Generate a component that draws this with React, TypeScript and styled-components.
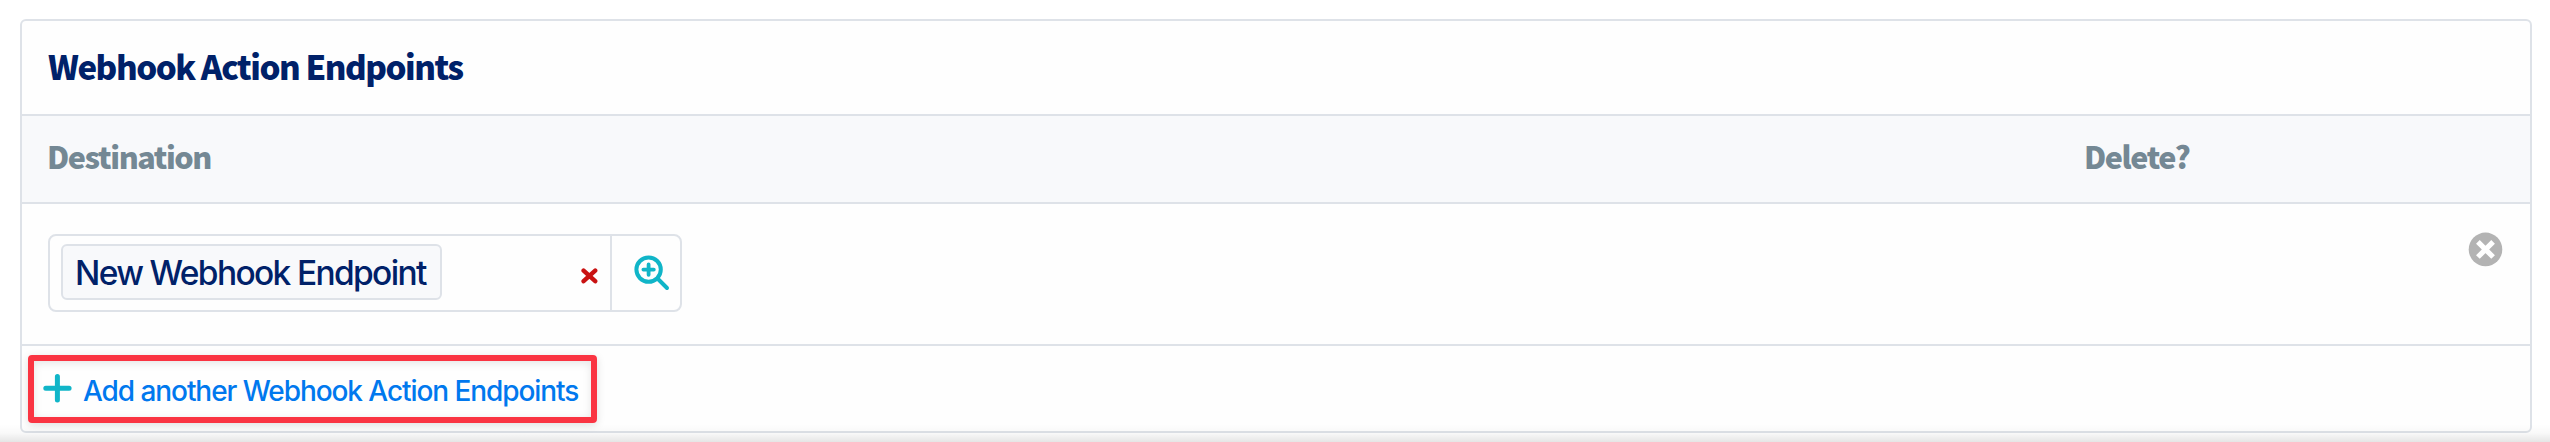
import React from "react";
import styled, { createGlobalStyle } from "styled-components";

const line = "#dee2e8";

const GlobalStyle = createGlobalStyle`
  *, *::before, *::after { box-sizing: border-box; }
  body { margin: 0; background: #fff; overflow: hidden; }
`;

const Page = styled.main`
  position: relative;
  width: 2550px;
  height: 442px;
  padding: 19px 18px 9px 20px;
  font-family: Inter, "Liberation Sans", sans-serif;
`;

const Panel = styled.section`
  height: 414px;
  border: 2px solid ${line};
  border-radius: 6px;
  background: #fefefe;
`;

const Title = styled.h2`
  margin: 0;
  height: 93px;
  padding-left: 26px;
  font: 900 33px/90px "Noto Sans CJK SC", sans-serif;
  letter-spacing: -1.45px;
  color: #002169;
`;

const HeaderRow = styled.div`
  display: grid;
  grid-template-columns: 2037px 1fr;
  height: 90px;
  padding-left: 25px;
  border: solid ${line};
  border-width: 2px 0;
  background: #f8f9fb;
`;

const HeaderCell = styled.div`
  font: 900 30.5px/81px "Noto Sans CJK SC", sans-serif;
  letter-spacing: -1.4px;
  color: #748894;
`;

const EndpointRow = styled.div`
  display: flex;
  justify-content: space-between;
  align-items: flex-start;
  height: 142px;
  padding: 28px 27px 0 26px;
  border-bottom: 2px solid ${line};
`;

const Picker = styled.div`
  display: flex;
  width: 634px;
  height: 78px;
  margin-top: 2px;
  border: 2px solid ${line};
  border-radius: 8px;
`;

const Selection = styled.div`
  display: flex;
  flex: 1;
  justify-content: space-between;
  padding: 8px 12px 8px 11px;
`;

const Chip = styled.span`
  width: 381px;
  height: 56px;
  padding-left: 12px;
  border: 2px solid ${line};
  border-radius: 6px;
  background: #f8f9fb;
  font-size: 33.5px;
  font-weight: 500;
  line-height: 54px;
  letter-spacing: -1.65px;
  white-space: nowrap;
  color: #002169;
`;

const IconButton = styled.button`
  padding: 0;
  border: 0;
  background: none;
  svg { display: block; }
`;

const ClearButton = styled(IconButton)`
  align-self: flex-start;
  margin-top: 24px;
`;

const LookupButton = styled(IconButton)`
  display: flex;
  align-items: flex-start;
  width: 70px;
  padding: 19px 0 0 22px;
  border-left: 2px solid ${line};
`;

const AddRow = styled.div`
  height: 85px;
  padding: 9px 0 0 6px;
`;

const Highlight = styled.div`
  display: flex;
  align-items: flex-start;
  width: 569px;
  height: 68px;
  padding: 13px 0 0 9px;
  border: 6px solid #fa3442;
  border-radius: 4px;
  box-shadow: 0 2px 8px rgba(0, 0, 0, 0.13), inset 0 2px 8px rgba(0, 0, 0, 0.1);
`;

const AddLink = styled.a`
  margin-left: 11px;
  font-size: 28px;
  font-weight: 500;
  line-height: 35px;
  letter-spacing: -1.07px;
  white-space: nowrap;
  color: #0078ee;
`;

const BottomFade = styled.div`
  position: absolute;
  inset: auto 0 0;
  height: 18px;
  background: linear-gradient(rgba(0, 0, 0, 0), rgba(0, 0, 0, 0.025) 50%, rgba(0, 0, 0, 0.1));
  pointer-events: none;
`;

const ClearIcon = () => (
  <svg width="17" height="16" viewBox="0 0 17 16" fill="none" stroke="#c91212" strokeWidth="4.4" strokeLinecap="round">
    <path d="M2.6 2.6 14.2 13.2M14.2 2.6 2.6 13.2" />
  </svg>
);

const LookupIcon = () => (
  <svg width="36" height="36" viewBox="0 0 36 36" fill="none" stroke="#10b5c8" strokeLinecap="round">
    <circle cx="14.6" cy="14.6" r="12.2" strokeWidth="4" />
    <path d="M14.6 9.4v10.4M9.4 14.6h10.4" strokeWidth="3.8" />
    <path d="M24.5 24.5 33 33" strokeWidth="4" />
  </svg>
);

const PlusIcon = () => (
  <svg width="29" height="29" viewBox="0 0 29 29" fill="none" stroke="#10b5c8" strokeWidth="5" strokeLinecap="round">
    <path d="M14.4 2.6v23.4M2.8 14.3h23.3" />
  </svg>
);

const DeleteIcon = () => (
  <svg width="35" height="35" viewBox="0 0 35 35">
    <circle cx="17.5" cy="17.4" r="16.8" fill="#b3b3b3" />
    <path d="M9.9 9.8 25.1 25M25.1 9.8 9.9 25" stroke="#fff" strokeWidth="5.2" />
  </svg>
);

export default function App() {
  return (
    <Page>
      <GlobalStyle />
      <Panel>
        <Title>Webhook Action Endpoints</Title>
        <HeaderRow>
          <HeaderCell>Destination</HeaderCell>
          <HeaderCell>Delete?</HeaderCell>
        </HeaderRow>
        <EndpointRow>
          <Picker>
            <Selection>
              <Chip>New Webhook Endpoint</Chip>
              <ClearButton aria-label="Clear"><ClearIcon /></ClearButton>
            </Selection>
            <LookupButton aria-label="Look up"><LookupIcon /></LookupButton>
          </Picker>
          <IconButton aria-label="Delete row"><DeleteIcon /></IconButton>
        </EndpointRow>
        <AddRow>
          <Highlight>
            <PlusIcon />
            <AddLink>Add another Webhook Action Endpoints</AddLink>
          </Highlight>
        </AddRow>
      </Panel>
      <BottomFade />
    </Page>
  );
}
